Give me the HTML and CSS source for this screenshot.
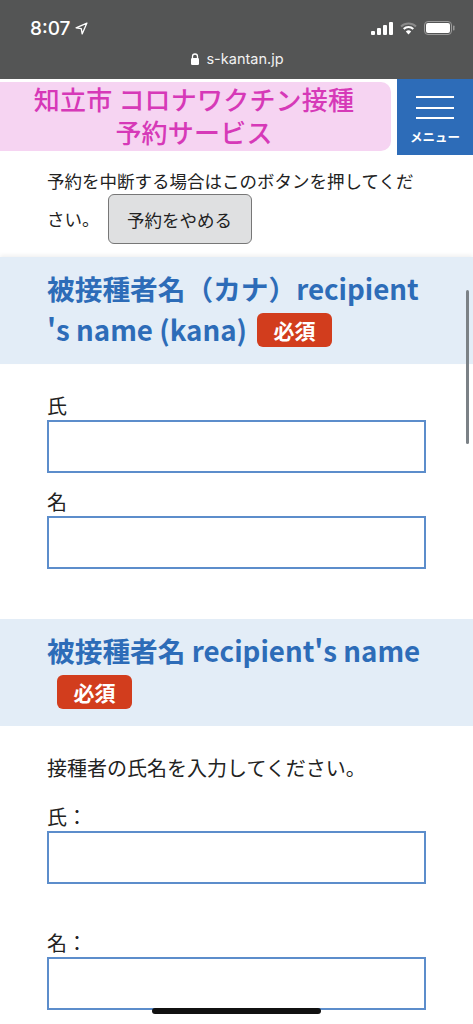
FILE: index.html
```html
<!DOCTYPE html>
<html lang="ja">
<head>
    <meta charset="UTF-8">
    <meta name="viewport" content="width=device-width, initial-scale=1.0">
    <title>知立市 コロナワクチン接種 予約サービス</title>
    <link rel="stylesheet" href="styles.css">
</head>
<body>
    <!-- Browser chrome -->
    <div class="chrome">
        <div class="status-row">
            <div class="clock">
                <span>8:07</span>
                <svg class="locate" width="13" height="13" viewBox="0 0 12 12"><path d="M11 1 L1 5.4 L5.8 6.2 L6.6 11 Z" fill="none" stroke="#fff" stroke-width="1.2" stroke-linejoin="round"/></svg>
            </div>
            <div class="status-icons">
                <svg width="22" height="13" viewBox="0 0 22 13"><rect x="0" y="9" width="4" height="4" rx="1" fill="#fff"/><rect x="6" y="6" width="4" height="7" rx="1" fill="#fff"/><rect x="12" y="3" width="4" height="10" rx="1" fill="#fff"/><rect x="18" y="0" width="4" height="13" rx="1" fill="#fff"/></svg>
                <svg width="17" height="13" viewBox="0 0 17 13"><path d="M1 4.5 A11 11 0 0 1 16 4.5" fill="none" stroke="#8a8a8a" stroke-width="2"/><path d="M3.7 7 A7 7 0 0 1 13.3 7" fill="none" stroke="#fff" stroke-width="2"/><path d="M8.5 12.5 L5.8 9.6 A4 4 0 0 1 11.2 9.6 Z" fill="#fff"/></svg>
                <svg width="31" height="14" viewBox="0 0 31 14"><rect x="0.5" y="0.5" width="27" height="13" rx="3.5" fill="none" stroke="#9a9a9a"/><rect x="2" y="2" width="24" height="10" rx="2" fill="#fff"/><rect x="29" y="4.5" width="1.5" height="5" rx="0.7" fill="#9a9a9a"/></svg>
            </div>
        </div>
        <div class="url-row">
            <svg width="10" height="12" viewBox="0 0 10 12"><path d="M2.5 5.5 V3.5 A2.5 2.5 0 0 1 7.5 3.5 V5.5" fill="none" stroke="#fff" stroke-width="1.3"/><rect x="1" y="5" width="8" height="7" rx="1.2" fill="#fff"/></svg>
            <span>s-kantan.jp</span>
        </div>
    </div>

    <!-- Site header -->
    <header class="site-header">
        <div class="site-title">知立市 コロナワクチン接種<br>予約サービス</div>
        <div class="menu-btn">
            <div class="menu-bars"><i></i><i></i><i></i></div>
            <div class="menu-label">メニュー</div>
        </div>
    </header>

    <div class="cancel-note">
        予約を中断する場合はこのボタンを押してください。<button class="cancel-btn">予約をやめる</button>
    </div>

    <!-- Form -->
    <h2 class="section-title first">被接種者名（カナ）recipient 's name (kana)<span class="required">必須</span></h2>
    <div class="section-body">
        <label class="field-label top">氏</label>
        <input class="field-input" type="text">
        <label class="field-label">名</label>
        <input class="field-input" type="text">
    </div>

    <h2 class="section-title second">被接種者名 recipient's name <span class="required">必須</span></h2>
    <div class="section-body">
        <p class="section-text">接種者の氏名を入力してください。</p>
        <label class="field-label colon">氏：</label>
        <input class="field-input" type="text">
        <label class="field-label colon far">名：</label>
        <input class="field-input" type="text">
    </div>

    <!-- Overlays from the phone -->
    <div class="scroll-thumb"></div>
    <div class="home-bar"></div>
</body>
</html>
```

FILE: styles.css
```css
* {
    box-sizing: border-box;
}
html, body {
    height: 1024px;
    overflow: hidden;
}
body {
    margin: 0;
    position: relative;
    background: #fff;
    color: #222;
    font-family: "Noto Sans CJK JP", "Noto Sans", sans-serif;
}

/* Browser chrome */
.chrome {
    height: 79px;
    background: #545555;
    color: #fff;
    padding: 0 18px 0 30px;
}
.status-row {
    height: 50px;
    padding-top: 16px;
    display: flex;
    justify-content: space-between;
    align-items: flex-start;
}
.clock {
    display: flex;
    align-items: center;
    gap: 5px;
    height: 24px;
    font-family: Inter, sans-serif;
    font-size: 19px;
    font-weight: 500;
}
.status-icons {
    display: flex;
    align-items: center;
    gap: 7px;
    height: 24px;
}
.url-row {
    display: flex;
    justify-content: center;
    align-items: center;
    gap: 6px;
    margin-right: 11px;
    font-family: Inter, sans-serif;
    font-size: 14.5px;
    color: #f2f2f2;
}

/* Site header */
.site-header {
    display: flex;
    height: 76px;
    align-items: flex-start;
}
.site-title {
    width: 391px;
    height: 69px;
    margin-top: 3px;
    background: #f6d4f2;
    border-radius: 0 10px 10px 0;
    color: #d639b8;
    font-size: 26px;
    font-weight: 500;
    line-height: 33px;
    text-align: center;
    padding-right: 3px;
    letter-spacing: 0.2px;
}
.menu-btn {
    width: 76px;
    height: 76px;
    margin-left: auto;
    background: #2d6cb8;
    color: #fff;
    padding-top: 17px;
}
.menu-bars {
    width: 38px;
    margin: 0 auto;
    height: 23px;
    display: flex;
    flex-direction: column;
    justify-content: space-between;
}
.menu-bars i {
    display: block;
    height: 2px;
    background: #fff;
}
.menu-label {
    font-size: 12.5px;
    font-weight: 700;
    text-align: center;
    margin-top: 9px;
    line-height: 18px;
}

/* Cancel note */
.cancel-note {
    padding: 7px 47px 0;
    height: 102px;
    font-size: 17.5px;
    line-height: 38px;
}
.cancel-btn {
    width: 144px;
    height: 50px;
    margin: -12px 0 -8px 8px;
    background: #dfe0e1;
    border: 1px solid #777;
    border-radius: 6px;
    color: #222;
    font: inherit;
    line-height: 1;
    vertical-align: middle;
}

/* Form sections */
.section-title {
    margin: 0;
    background: #e3edf7;
    color: #2d6cb8;
    font-size: 27.7px;
    font-weight: 700;
    line-height: 41px;
    padding: 11px 47px 14px;
    height: 107px;
}
.section-title.first {
    box-shadow: 0 -2px 4px rgba(0, 0, 0, 0.06);
}
.section-title.second {
    margin-top: 50px;
}
.required {
    display: inline-block;
    width: 75px;
    height: 34px;
    margin-left: 10px;
    background: #d23d1d;
    border-radius: 6px;
    color: #fff;
    font-size: 21px;
    line-height: 34px;
    text-align: center;
    vertical-align: 2px;
}
.section-body {
    padding: 0 47px;
}
.section-text {
    margin: 0;
    padding-top: 26px;
    font-size: 20px;
    line-height: 32px;
}
.field-label {
    display: block;
    font-size: 20px;
    line-height: 28px;
    margin-top: 15px;
}
.field-label.top {
    margin-top: 28px;
}
.field-label.colon {
    margin-top: 19px;
}
.field-label.far {
    margin-top: 45px;
}
.field-input {
    display: block;
    width: 379px;
    height: 53px;
    border: 2px solid #5c8dcb;
    background: #fff;
    margin: 0;
}

/* Phone overlays */
.scroll-thumb {
    position: absolute;
    left: 466px;
    top: 290px;
    width: 3px;
    height: 154px;
    border-radius: 2px;
    background: #7b8186;
}
.home-bar {
    position: absolute;
    left: 152px;
    top: 1008px;
    width: 169px;
    height: 6px;
    border-radius: 3px;
    background: #111;
}
```
